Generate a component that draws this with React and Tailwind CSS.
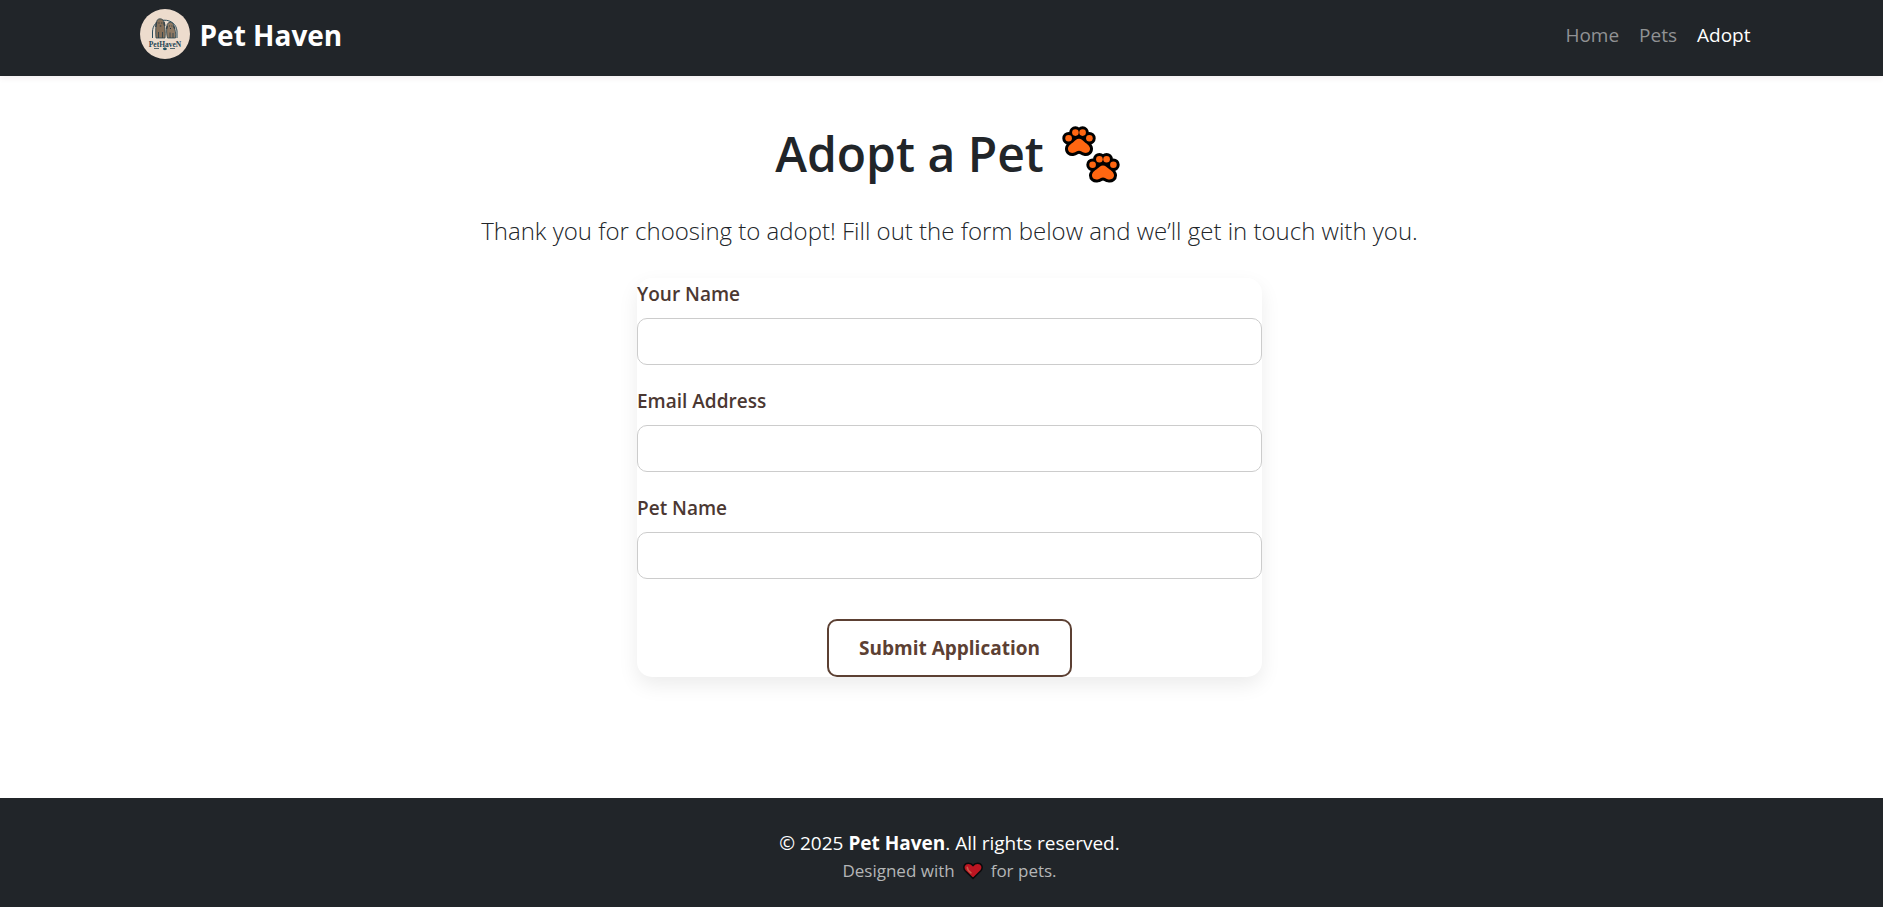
const navLinks = [
  { label: 'Home', active: false },
  { label: 'Pets', active: false },
  { label: 'Adopt', active: true },
];

const fields = [
  { id: 'name', label: 'Your Name', type: 'text' },
  { id: 'email', label: 'Email Address', type: 'email' },
  { id: 'pet', label: 'Pet Name', type: 'text' },
];

function Logo() {
  return (
    <svg viewBox="0 0 50 50" className="size-[50px] shrink-0" aria-hidden="true">
      <circle cx="25" cy="25" r="25" fill="#eddccd" />
      <path d="M12.5 29V23C12.5 16 17 11.5 24 11.2C31 11 36.5 15.5 37 22V29" fill="none" stroke="#2b4c5c" strokeWidth="1" />
      <path d="M16.5 14C16.5 11 18 9.800 20 9.800C22.500 9.800 24 11.500 23.800 14C24.800 18 25.800 23 25 29H16C15.500 24 15.500 18 16.500 14Z" fill="#86705a" stroke="#2b4650" strokeWidth="0.8" />
      <path d="M27 17C26.800 15 28.300 13.300 30.300 13.300C32.500 13.300 34 15 33.500 17.500C35.500 20 36 25 35.500 29H27.500C26.500 25 26.300 21 27 17Z" fill="#8f7963" stroke="#2b4650" strokeWidth="0.8" />
      <path d="M16.500 13L15.800 18M24 13L24.800 17M27.300 17L26.500 20M33.800 17L34.800 20" stroke="#38444a" strokeWidth="1.500" />
      <path d="M18.500 23V29M22.500 23V29M30 23.500V29M33 24V29" stroke="#263e49" strokeWidth="0.800" />
      <path d="M18.500 14h1M21.300 14h1M29 17h.8M31.500 17h.8M19.800 17h1.500M30 19.500h1" stroke="#20313a" strokeWidth="1" />
      <text x="25" y="37.500" textAnchor="middle" fontSize="7.500" fill="#1f4555" className="font-['Liberation_Serif',serif] font-bold">PetHaveN</text>
      <path d="M14 39.500h5M30 39.500h5" stroke="#3f5e69" strokeWidth="0.900" />
      <path d="M22.800 40C23.500 38 26 38 27 40C26.500 41.500 23.500 41.500 22.800 40Z" fill="#1f5265" />
    </svg>
  );
}

const padPath =
  'M17 12.8C14.500 12.800 13.500 14.200 11.500 16C9.500 17.800 6.300 19.300 6 22.500C5.800 25.500 8.500 27.500 11.500 26.800C14 26.300 15 24.800 17 24.800S20 26.300 22.500 26.800C25.500 27.500 28.200 25.500 28 22.500C27.700 19.300 24.500 17.800 22.500 16C20.500 14.200 19.500 12.800 17 12.800Z';

const toes = [
  [6.6, 12.2],
  [13.4, 6.6],
  [20.6, 6.6],
  [27.4, 12.2],
];

function Paw({ x, y }) {
  return (
    <g transform={`translate(${x} ${y})`}>
      <g fill="#000" stroke="#000" strokeWidth="6" strokeLinejoin="round">
        {toes.map(([cx, cy]) => (
          <circle key={cx} cx={cx} cy={cy} r="3.300" />
        ))}
        <path d={padPath} />
      </g>
      <g fill="#ff6611">
        {toes.map(([cx, cy]) => (
          <circle key={cx} cx={cx} cy={cy} r="3.300" />
        ))}
        <path d={padPath} />
      </g>
    </g>
  );
}

function Paws() {
  return (
    <svg viewBox="0 0 62 58" className="h-[58px] w-[62px] shrink-0" aria-hidden="true">
      <Paw x={0} y={1} />
      <Paw x={24} y={27.6} />
    </svg>
  );
}

function Heart() {
  return (
    <svg viewBox="0 0 20 18" className="h-[18px] w-5" aria-hidden="true">
      <path d="M10 16.5L2.2 8.700C-.5 5.500 1.200 1.200 5.300 1.200C7.500 1.200 9 2.200 10 3.700C11 2.200 12.500 1.200 14.700 1.200C18.800 1.200 20.500 5.500 17.800 8.700Z" fill="#bd1622" stroke="#090a0b" strokeWidth="1.500" strokeLinejoin="round" />
      <path d="M4.300 5.300C4.300 7.500 6 9.500 8 10.800" fill="none" stroke="#c75d4b" strokeWidth="1.600" strokeLinecap="round" />
    </svg>
  );
}

export default function App() {
  return (
    <div className="flex min-h-screen flex-col bg-white font-['Open_Sans',sans-serif] text-[19px] text-[#212529]">
      <header className="bg-[#212529] pl-4 shadow-[0_2px_6px_rgba(90,20,50,0.08)]">
        <nav className="mx-auto flex h-[76px] max-w-[1650px] items-center justify-between pr-6 pb-2 pl-[15px]">
          <a href="#home" className="flex items-center gap-2.5 text-[28px] font-bold text-white">
            <Logo />
            <span className="pt-0.5">Pet Haven</span>
          </a>
          <ul className="flex items-center gap-5 pt-0.5">
            {navLinks.map((link) => (
              <li key={link.label}>
                <a
                  href={`#${link.label.toLowerCase()}`}
                  aria-current={link.active ? 'page' : undefined}
                  className={link.active ? 'text-white' : 'text-[#909294]'}
                >
                  {link.label}
                </a>
              </li>
            ))}
          </ul>
        </nav>
      </header>

      <main className="flex flex-1 flex-col items-center pt-12 pb-[60px] pl-4">
        <h1 className="flex items-center gap-[18px] text-[48px] leading-[60px] font-semibold">
          Adopt a Pet
          <Paws />
        </h1>
        <p className="mt-7 text-center text-2xl leading-[38px] font-light">
          Thank you for choosing to adopt! Fill out the form below and we’ll get in touch with you.
        </p>
        <form className="mt-7 flex w-full max-w-[625px] flex-col rounded-[15px] bg-white shadow-[0_8px_20px_rgba(0,0,0,0.08)]">
          {fields.map((field) => (
            <div key={field.id} className="mb-5 flex flex-col gap-2">
              <label htmlFor={field.id} className="leading-8 font-semibold text-[#4b3832]">
                {field.label}
              </label>
              <input
                id={field.id}
                name={field.id}
                type={field.type}
                className="h-[47px] w-full rounded-[10px] border border-[#cccccc] bg-white px-4"
              />
            </div>
          ))}
          <button
            type="submit"
            className="mt-5 h-[58px] self-center rounded-[10px] border-2 border-[#5c4033] bg-white px-[30px] font-bold text-[#5c4033]"
          >
            Submit Application
          </button>
        </form>
      </main>

      <footer className="h-[109px] bg-[#212529] pt-[30px] pl-4 text-center text-white">
        <p className="leading-[30px]">
          © 2025 <strong>Pet Haven</strong>. All rights reserved.
        </p>
        <p className="flex items-center justify-center gap-2 text-[17px] leading-[26px] text-[#b4b6b7]">
          Designed with <Heart /> for pets.
        </p>
      </footer>
    </div>
  );
}
